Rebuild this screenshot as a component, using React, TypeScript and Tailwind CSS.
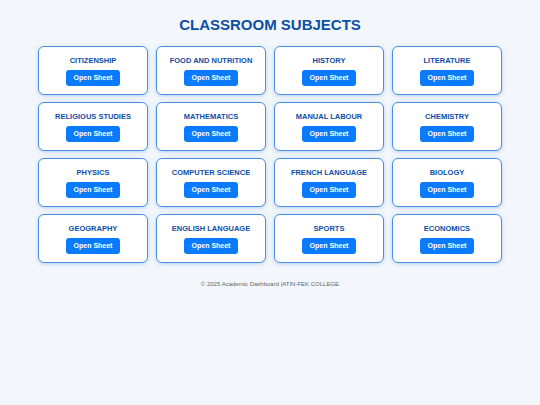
const subjects = [
  'CITIZENSHIP',
  'FOOD AND NUTRITION',
  'HISTORY',
  'LITERATURE',
  'RELIGIOUS STUDIES',
  'MATHEMATICS',
  'MANUAL LABOUR',
  'CHEMISTRY',
  'PHYSICS',
  'COMPUTER SCIENCE',
  'FRENCH LANGUAGE',
  'BIOLOGY',
  'GEOGRAPHY',
  'ENGLISH LANGUAGE',
  'SPORTS',
  'ECONOMICS',
];

export default function App() {
  return (
    <div className="min-h-[405px] bg-[#f3f7fb] font-['Liberation_Sans',Arial,sans-serif]">
      <div className="mx-auto w-[464px] pt-[15px]">
        <h1 className="text-center text-[15px] font-bold leading-[20px] text-[#0d4ea6]">
          CLASSROOM SUBJECTS
        </h1>

        <div className="mt-[11px] grid grid-cols-4 gap-x-[8px] gap-y-[7px]">
          {subjects.map((s) => (
            <div
              key={s}
              className="flex h-[49px] flex-col items-center rounded-[6px] border border-[#4a90e2] bg-white pt-[9px] shadow-[0_1px_4px_rgba(74,144,226,0.35)]"
            >
              <div className="text-[7.5px] font-bold leading-[10px] text-[#0d4ea6]">{s}</div>
              <button className="mt-[4px] h-[16px] w-[54px] rounded-[3px] bg-[#0a7bff] text-[7px] font-bold leading-[16px] text-white">
                Open Sheet
              </button>
            </div>
          ))}
        </div>

        <p className="mt-[17px] text-center text-[6px] leading-[8px] text-[#666]">
          © 2025 Academic Dashboard |ATIN-FEK COLLEGE
        </p>
      </div>
    </div>
  );
}
